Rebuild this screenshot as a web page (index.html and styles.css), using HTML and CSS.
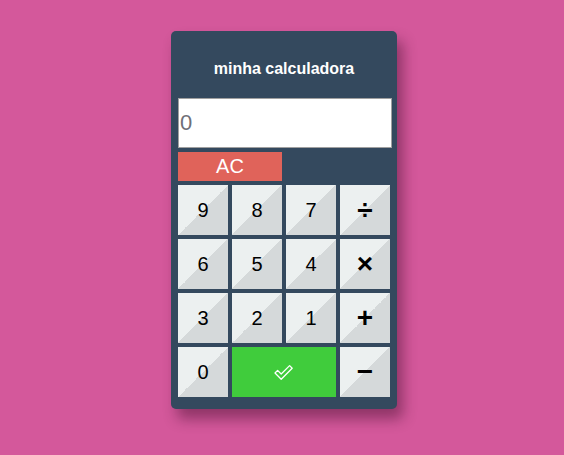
FILE: index.html
```html
<!DOCTYPE html>
<html>
<head>
<meta charset="utf-8">
<link rel="stylesheet" href="styles.css">
</head>
<body>
<div class="calc">
  <div class="title">minha calculadora</div>
  <div class="display">0</div>
  <div class="ac-row"><button class="ac">AC</button></div>
  <div class="keys">
    <button class="key">9</button>
    <button class="key">8</button>
    <button class="key">7</button>
    <button class="key op">÷</button>
    <button class="key">6</button>
    <button class="key">5</button>
    <button class="key">4</button>
    <button class="key op">×</button>
    <button class="key">3</button>
    <button class="key">2</button>
    <button class="key">1</button>
    <button class="key op">+</button>
    <button class="key">0</button>
    <button class="key eq"><svg width="20" height="19" viewBox="0 0 20 19"><path d="M1 10 L3.6 7.4 L7.2 11 L15.6 2.6 L18.2 5.2 L7.2 16.2 Z" fill="none" stroke="#fff" stroke-width="1.3" stroke-linejoin="round"/></svg></button>
    <button class="key op">−</button>
  </div>
</div>
</body>
</html>
```
FILE: styles.css
```css
html, body {
  margin: 0;
  padding: 0;
}
body {
  background: #d4589b;
  font-family: "Liberation Sans", Arial, sans-serif;
  height: 455px;
  overflow: hidden;
}
.calc {
  box-sizing: border-box;
  width: 226px;
  margin: 31px 0 0 171px;
  padding: 0 7px 12px 7px;
  background: #34495e;
  border-radius: 5px;
  box-shadow: 6px 10px 14px rgba(60, 10, 40, 0.45);
}
.title {
  padding-top: 29px;
  line-height: 17px;
  font-size: 16px;
  font-weight: bold;
  color: #fff;
  text-align: center;
  margin-bottom: 21px;
}
.display {
  box-sizing: border-box;
  width: 214px;
  height: 50px;
  background: #fff;
  border: 1px solid #a0a0a0;
  color: #6f6f78;
  font-size: 22px;
  line-height: 48px;
  padding-left: 1px;
}
.ac-row {
  display: flex;
  margin-top: 4px;
}
.ac {
  width: 104px;
  height: 29px;
  border: none;
  padding: 0;
  background: #e0635a;
  color: #fff;
  font-family: "Liberation Sans", Arial, sans-serif;
  font-size: 20px;
}
.keys {
  margin-top: 4px;
  display: grid;
  grid-template-columns: repeat(4, 50px);
  grid-auto-rows: 50px;
  gap: 4px;
}
.key {
  border: none;
  padding: 0;
  background: linear-gradient(to bottom right, #ecf0f0 50%, #d5d9da 50%);
  color: #000;
  font-family: "Liberation Sans", Arial, sans-serif;
  font-size: 20px;
  display: flex;
  align-items: center;
  justify-content: center;
}
.op {
  font-size: 28px;
  font-weight: bold;
}
.eq {
  grid-column: span 2;
  background: #40cc3c;
}
.eq svg {
  display: block;
}
```
